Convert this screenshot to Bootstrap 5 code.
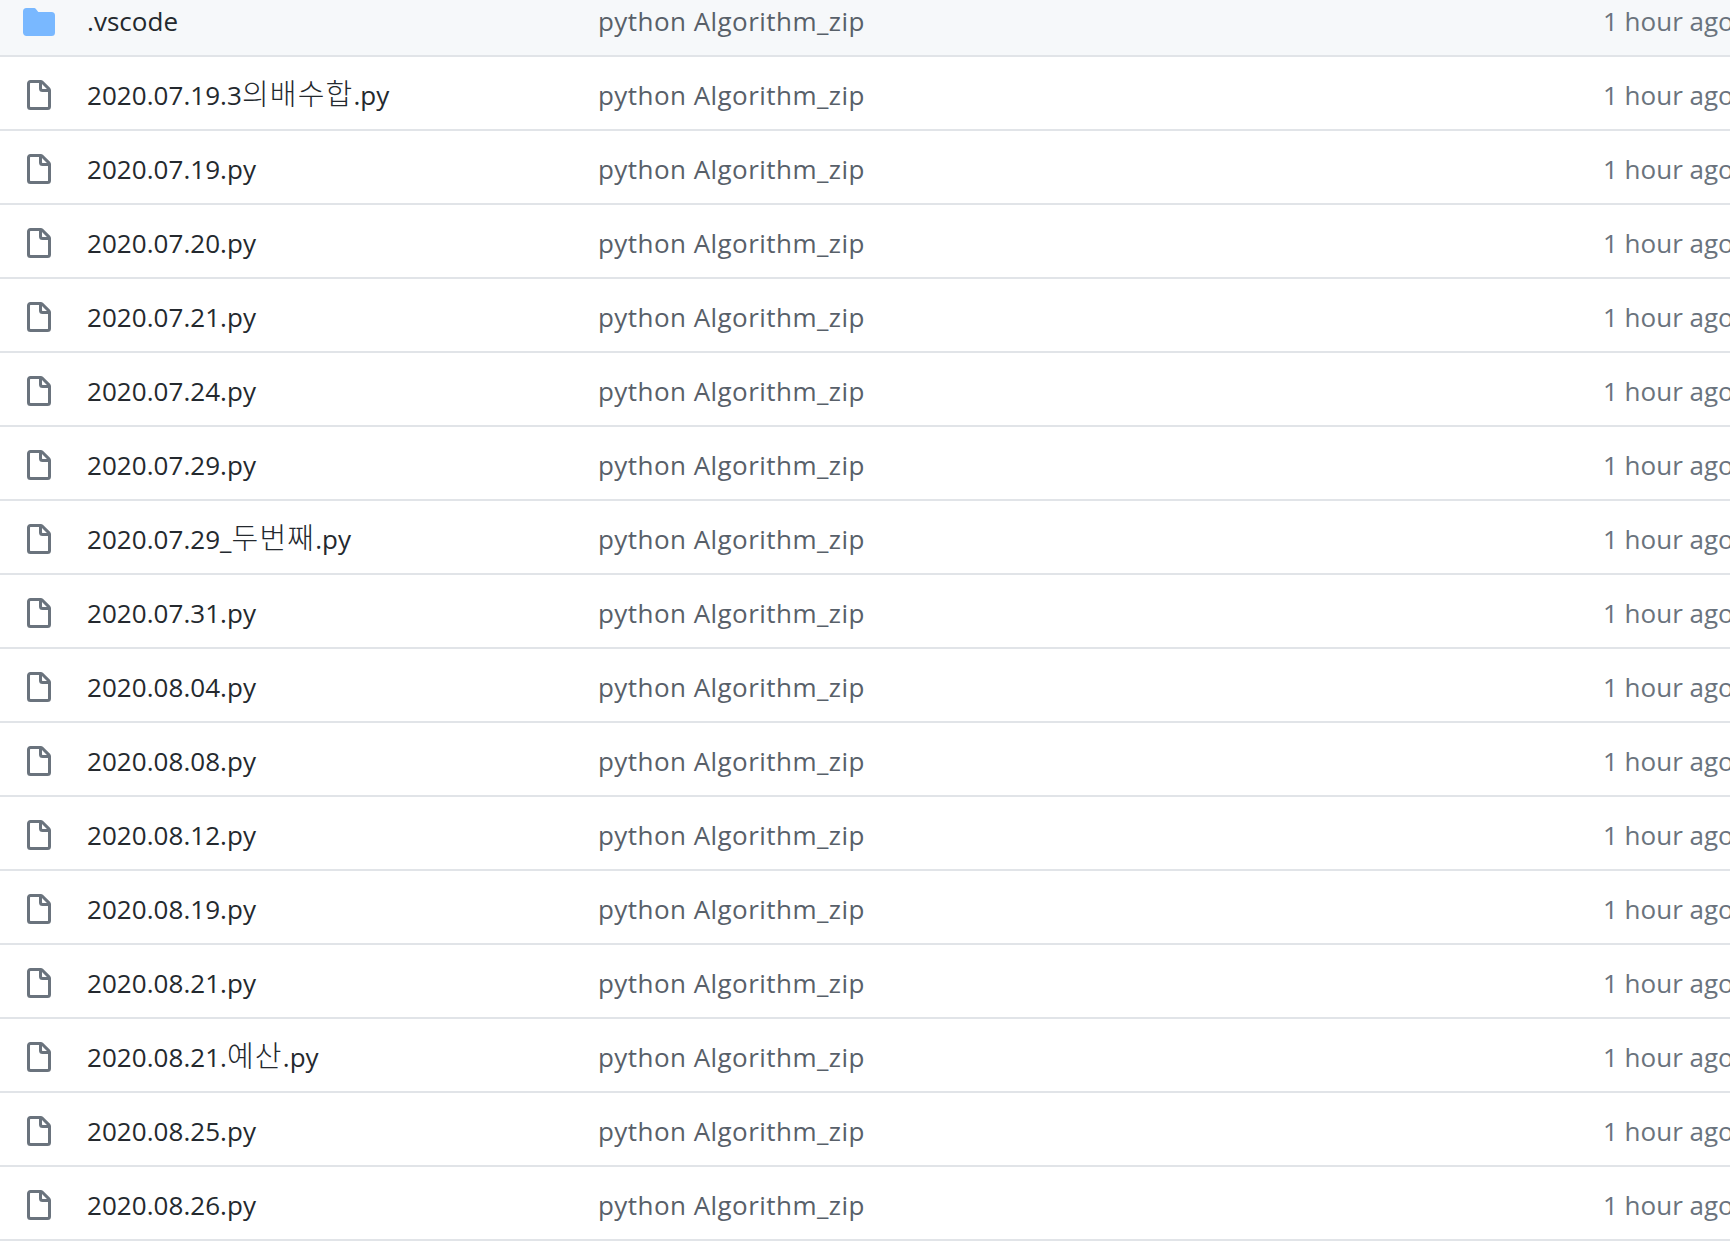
<!DOCTYPE html>
<html lang="ko">
<head>
  <meta charset="UTF-8">
  <title>python Algorithm_zip</title>
  <link href="https://cdn.jsdelivr.net/npm/bootstrap@5.3.3/dist/css/bootstrap.min.css" rel="stylesheet">
  <style>
    html, body {
      overflow: hidden;
    }
    body {
      background: #fff;
      color: #24292e;
      font-family: "Open Sans", "Noto Sans CJK KR", sans-serif;
      font-size: 26px;
    }
    .file-row {
      height: 74px;
      border-bottom: 2px solid #e1e4e8;
      white-space: nowrap;
    }
    .file-icon {
      flex: 0 0 87px;
      padding-left: 23px;
      margin-top: 6px;
    }
    .file-icon svg { display: block; }
    .file-name { flex: 0 0 511px; margin-top: 4px; letter-spacing: .05px; }
    .file-msg { flex: 0 0 1005px; margin-top: 4px; color: #586069; letter-spacing: .45px; }
    .file-age { flex: 0 0 auto; margin-top: 4px; color: #6a737d; }
    .hangul { font-size: 29px; font-weight: 300; line-height: 0; letter-spacing: 1.2px; }
    .file-row.top-row {
      height: 57px;
      background: #f6f8fa;
      align-items: flex-start !important;
    }
    .top-row .file-name, .top-row .file-msg, .top-row .file-age { margin-top: 0; line-height: 42px; }
  </style>
</head>
<body>
  <div id="fileList"></div>

  <script src="https://cdn.jsdelivr.net/npm/bootstrap@5.3.3/dist/js/bootstrap.bundle.min.js"></script>
  <script>
    const names = [
      ".vscode", "2020.07.19.3의배수합.py", "2020.07.19.py", "2020.07.20.py", "2020.07.21.py",
      "2020.07.24.py", "2020.07.29.py", "2020.07.29_두번째.py", "2020.07.31.py", "2020.08.04.py",
      "2020.08.08.py", "2020.08.12.py", "2020.08.19.py", "2020.08.21.py", "2020.08.21.예산.py",
      "2020.08.25.py", "2020.08.26.py"
    ];
    const folderIcon = `<svg width="32" height="32" viewBox="0 0 16 16" fill="#79b8ff"><path d="M1.75 1A1.75 1.75 0 000 2.75v10.5C0 14.216.784 15 1.75 15h12.5A1.75 1.75 0 0016 13.25v-8.5A1.75 1.75 0 0014.25 3h-6.5a.25.25 0 01-.2-.1l-.9-1.2c-.33-.44-.85-.7-1.4-.7h-3.5z"/></svg>`;
    const fileIcon = `<svg width="32" height="32" viewBox="0 0 16 16" fill="#6a737d"><path fill-rule="evenodd" d="M3.75 1.5a.25.25 0 00-.25.25v11.5c0 .138.112.25.25.25h8.5a.25.25 0 00.25-.25V6H9.75A1.75 1.75 0 018 4.25V1.5H3.75zm5.75.56v2.19c0 .138.112.25.25.25h2.19L9.5 2.06zM2 1.75C2 .784 2.784 0 3.75 0h5.086c.464 0 .909.184 1.237.513l3.414 3.414c.329.328.513.773.513 1.237v8.086A1.75 1.75 0 0112.25 15h-8.5A1.75 1.75 0 012 13.25V1.75z"/></svg>`;

    // hangul runs come out narrower than the picture, so they get their own size
    const markName = name => name.replace(/[가-힣]+/g, m => `<span class="hangul">${m}</span>`);

    document.getElementById('fileList').innerHTML = names.map((name, idx) => `
      <div class="file-row d-flex align-items-center${idx === 0 ? ' top-row' : ''}">
        <div class="file-icon">${idx === 0 ? folderIcon : fileIcon}</div>
        <div class="file-name">${markName(name)}</div>
        <div class="file-msg">python Algorithm_zip</div>
        <div class="file-age">1 hour ago</div>
      </div>
    `).join('');
  </script>
</body>
</html>
